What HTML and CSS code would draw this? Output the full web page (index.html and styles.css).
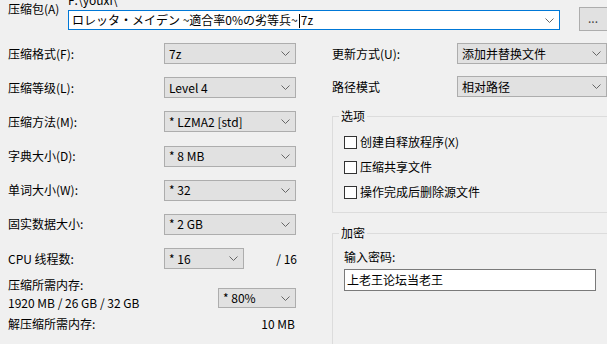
FILE: index.html
```html
<!DOCTYPE html>
<html>
<head>
    <meta charset="utf-8">
    <title>添加到压缩包</title>
<link rel="stylesheet" href="styles.css">
</head>
<body>
    <div class="archive">
        <span class="archive-label">压缩包(A)</span>
        <div class="archive-field">
            <div class="path">F:\youxi\</div>
            <div class="edit-combo">
                <span class="edit-text">ロレッタ・メイデン ~適合率0%の劣等兵~<span class="caret"></span>7z</span>
                <svg class="chevron" width="9" height="5" viewBox="0 0 9 5"><polyline points="0.5,0.5 4.5,4.5 8.5,0.5"/></svg>
            </div>
        </div>
        <div class="browse">...</div>
    </div>

    <div class="main">
        <div class="left">
            <div class="settings">
                <div class="row">
                    <span class="row-label">压缩格式(F):</span>
                    <div class="combo"><span>7z</span><svg class="chevron" width="9" height="5" viewBox="0 0 9 5"><polyline points="0.5,0.5 4.5,4.5 8.5,0.5"/></svg></div>
                </div>
                <div class="row">
                    <span class="row-label">压缩等级(L):</span>
                    <div class="combo"><span>Level 4</span><svg class="chevron" width="9" height="5" viewBox="0 0 9 5"><polyline points="0.5,0.5 4.5,4.5 8.5,0.5"/></svg></div>
                </div>
                <div class="row">
                    <span class="row-label">压缩方法(M):</span>
                    <div class="combo"><span>* LZMA2 [std]</span><svg class="chevron" width="9" height="5" viewBox="0 0 9 5"><polyline points="0.5,0.5 4.5,4.5 8.5,0.5"/></svg></div>
                </div>
                <div class="row">
                    <span class="row-label">字典大小(D):</span>
                    <div class="combo"><span>* 8 MB</span><svg class="chevron" width="9" height="5" viewBox="0 0 9 5"><polyline points="0.5,0.5 4.5,4.5 8.5,0.5"/></svg></div>
                </div>
                <div class="row">
                    <span class="row-label">单词大小(W):</span>
                    <div class="combo"><span>* 32</span><svg class="chevron" width="9" height="5" viewBox="0 0 9 5"><polyline points="0.5,0.5 4.5,4.5 8.5,0.5"/></svg></div>
                </div>
                <div class="row">
                    <span class="row-label">固实数据大小:</span>
                    <div class="combo"><span>* 2 GB</span><svg class="chevron" width="9" height="5" viewBox="0 0 9 5"><polyline points="0.5,0.5 4.5,4.5 8.5,0.5"/></svg></div>
                </div>
                <div class="row">
                    <span class="row-label">CPU 线程数:</span>
                    <div class="combo short"><span>* 16</span><svg class="chevron" width="9" height="5" viewBox="0 0 9 5"><polyline points="0.5,0.5 4.5,4.5 8.5,0.5"/></svg></div>
                    <span class="threads">/ 16</span>
                </div>
            </div>

            <div class="memory">
                <div class="mem-need">
                    <div class="mem-lines">
                        <span>压缩所需内存:</span>
                        <span>1920 MB / 26 GB / 32 GB</span>
                    </div>
                    <div class="combo mem"><span>* 80%</span><svg class="chevron" width="9" height="5" viewBox="0 0 9 5"><polyline points="0.5,0.5 4.5,4.5 8.5,0.5"/></svg></div>
                </div>
                <div class="mem-free">
                    <span>解压缩所需内存:</span>
                    <span>10 MB</span>
                </div>
            </div>
        </div>

        <div class="right">
            <div class="right-rows">
                <div class="row">
                    <span class="right-label">更新方式(U):</span>
                    <div class="combo wide"><span>添加并替换文件</span><svg class="chevron" width="9" height="5" viewBox="0 0 9 5"><polyline points="0.5,0.5 4.5,4.5 8.5,0.5"/></svg></div>
                </div>
                <div class="row">
                    <span class="right-label">路径模式</span>
                    <div class="combo wide"><span>相对路径</span><svg class="chevron" width="9" height="5" viewBox="0 0 9 5"><polyline points="0.5,0.5 4.5,4.5 8.5,0.5"/></svg></div>
                </div>
            </div>

            <fieldset class="group options">
                <legend>选项</legend>
                <div class="check"><span class="box"></span>创建自释放程序(X)</div>
                <div class="check"><span class="box"></span>压缩共享文件</div>
                <div class="check"><span class="box"></span>操作完成后删除源文件</div>
            </fieldset>

            <fieldset class="group encrypt">
                <legend>加密</legend>
                <div class="pass-label">输入密码:</div>
                <div class="pass-input">上老王论坛当老王</div>
            </fieldset>
        </div>
    </div>
</body>
</html>
```

FILE: styles.css
```css
*{
    box-sizing: border-box;
}
body{
    margin: 0;
    width: 607px;
    height: 344px;
    overflow: hidden;
    background: #f0f0f0;
    color: #000;
    font: 12px/14px "Noto Sans CJK SC", sans-serif;
}

/* 压缩包 */
.archive{
    display: flex;
    align-items: flex-start;
    height: 31px;
    padding-left: 8px;
}
.archive-label{
    width: 60px;
    flex: none;
    margin-top: 2px;
}
.archive-field{
    width: 492px;
    flex: none;
}
/* 路径只露出下半截 */
.path{
    height: 10px;
    line-height: 0;
    white-space: nowrap;
}
.edit-combo{
    display: flex;
    align-items: center;
    justify-content: space-between;
    height: 20px;
    padding: 0 5px 0 3px;
    border: 1px solid #0078d7;
    background: #fff;
}
.edit-text{
    font-family: "Noto Sans CJK JP", sans-serif;
    white-space: nowrap;
}
.caret{
    display: inline-block;
    width: 1px;
    height: 14px;
    margin: 0 1px -3px;
    background: #000;
}
.browse{
    flex: none;
    width: 30px;
    height: 24px;
    margin: 7px 0 0 19px;
    padding-left: 8px;
    border: 1px solid #adadad;
    background: #e1e1e1;
    color: #444;
    line-height: 20px;
}
.chevron{
    flex: none;
    fill: none;
    stroke: #666;
    stroke-width: 1;
}

/* 主体 */
.main{
    display: flex;
    padding: 12px 0 0 8px;
}
.left{
    width: 288px;
    flex: none;
}
.settings{
    display: flex;
    flex-direction: column;
    gap: 13.2px;
}
.row{
    display: flex;
    align-items: center;
    height: 21px;
}
.row-label{
    width: 156px;
    flex: none;
}
.combo{
    display: flex;
    align-items: center;
    justify-content: space-between;
    width: 132px;
    height: 21px;
    flex: none;
    padding: 0 5px 0 4px;
    border: 1px solid #adadad;
    background: #e1e1e1;
    white-space: nowrap;
}
.combo.short{width: 80px;}
.threads{
    margin-left: auto;
    margin-right: -1px;
}
.memory{
    margin-top: 9px;
}
.mem-need{
    display: flex;
    justify-content: space-between;
    align-items: flex-end;
}
.mem-lines{
    display: flex;
    flex-direction: column;
    gap: 4px;
}
.combo.mem{
    width: 78px;
    height: 20px;
    margin-bottom: 2px;
}
.mem-free{
    display: flex;
    justify-content: space-between;
    margin-top: 7px;
    padding-right: 1px;
}

/* 右侧 */
.right{
    width: 300px;
    flex: none;
    margin-left: 36px;
}
.right-rows{
    display: flex;
    flex-direction: column;
    gap: 12px;
}
.right-label{
    width: 125px;
    flex: none;
}
.combo.wide{width: 150px;}
.group{
    margin: 12px 0 0;
    padding: 9px 11px 10px;
    min-width: 0;
    border: 1px solid #dcdcdc;
}
.group legend{
    padding: 0 2px;
    margin-left: -5px;
    line-height: 14px;
}
.options{
    display: flex;
    flex-direction: column;
    gap: 5px;
}
.check{
    display: flex;
    align-items: center;
    height: 20px;
}
.box{
    width: 13px;
    height: 13px;
    margin-right: 3px;
    border: 1px solid #333;
    background: #fff;
}
.encrypt{
    margin-top: 13px;
    padding: 10px 11px 60px;
}
.pass-input{
    width: 252px;
    height: 22px;
    margin-top: 5px;
    padding-left: 2px;
    border: 1px solid #7a7a7a;
    background: #fff;
    line-height: 20px;
}
```
